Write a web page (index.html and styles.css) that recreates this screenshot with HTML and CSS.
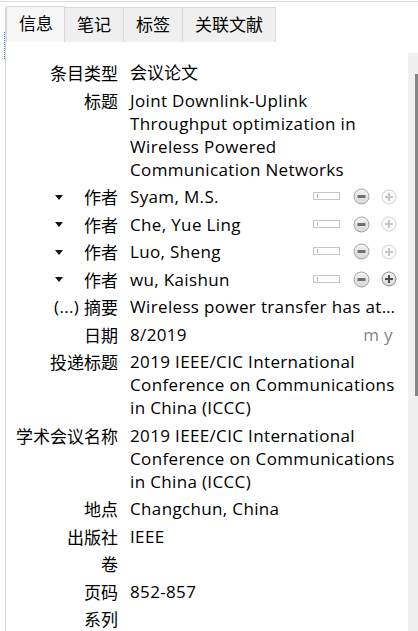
FILE: index.html
```html
<!DOCTYPE html>
<html lang="zh-CN">
<head>
<meta charset="utf-8">
<title>条目信息</title>
<link rel="stylesheet" href="styles.css">
</head>
<body>
<div class="app">
  <div class="topline"></div>
  <div class="main">
    <div class="gutter">
      <div class="focus"></div>
      <div class="gutter-line"></div>
    </div>
    <div class="pane">
      <div class="tabs">
        <div class="tab tab-active">信息</div>
        <div class="tab">笔记</div>
        <div class="tab">标签</div>
        <div class="tab">关联文献</div>
      </div>
      <div class="body">
        <div class="content">
          <div class="row"><div class="label">条目类型</div><div class="value cjk">会议论文</div></div>
          <div class="row"><div class="label">标题</div><div class="value">Joint Downlink-Uplink<br>Throughput optimization in<br>Wireless Powered<br>Communication Networks</div></div>

          <div class="row"><div class="label"><span class="tri"></span>作者</div><div class="value author"><span class="name">Syam, M.S.</span>
            <svg class="ico-box" width="27" height="8" viewBox="0 0 27 8"><rect x="0.5" y="0.5" width="26" height="7" fill="#fdfdfd" stroke="#c6c6c6"/><line x1="4.5" y1="2" x2="4.5" y2="6" stroke="#b4b4b4"/></svg>
            <svg class="ico-minus" width="17" height="17" viewBox="0 0 17 17"><defs><linearGradient id="gm" x1="0" y1="0" x2="0" y2="1"><stop offset="0" stop-color="#f4f4f4"/><stop offset="1" stop-color="#d6d6d6"/></linearGradient></defs><circle cx="8.5" cy="8.5" r="7.5" fill="url(#gm)" stroke="#a2a2a2"/><rect x="4.5" y="7" width="8" height="3" rx="0.5" fill="#6e6e6e"/></svg>
            <svg class="ico-plus" width="16" height="16" viewBox="0 0 16 16"><circle cx="8" cy="8" r="7" fill="#fafafa" stroke="#d2d2d2"/><rect x="4" y="7" width="8" height="2" fill="#c6c6c6"/><rect x="7" y="4" width="2" height="8" fill="#c6c6c6"/></svg>
          </div></div>

          <div class="row"><div class="label"><span class="tri"></span>作者</div><div class="value author"><span class="name">Che, Yue Ling</span>
            <svg class="ico-box" width="27" height="8" viewBox="0 0 27 8"><rect x="0.5" y="0.5" width="26" height="7" fill="#fdfdfd" stroke="#c6c6c6"/><line x1="4.5" y1="2" x2="4.5" y2="6" stroke="#b4b4b4"/></svg>
            <svg class="ico-minus" width="17" height="17" viewBox="0 0 17 17"><circle cx="8.5" cy="8.5" r="7.5" fill="url(#gm)" stroke="#a2a2a2"/><rect x="4.5" y="7" width="8" height="3" rx="0.5" fill="#6e6e6e"/></svg>
            <svg class="ico-plus" width="16" height="16" viewBox="0 0 16 16"><circle cx="8" cy="8" r="7" fill="#fafafa" stroke="#d2d2d2"/><rect x="4" y="7" width="8" height="2" fill="#c6c6c6"/><rect x="7" y="4" width="2" height="8" fill="#c6c6c6"/></svg>
          </div></div>

          <div class="row"><div class="label"><span class="tri"></span>作者</div><div class="value author"><span class="name">Luo, Sheng</span>
            <svg class="ico-box" width="27" height="8" viewBox="0 0 27 8"><rect x="0.5" y="0.5" width="26" height="7" fill="#fdfdfd" stroke="#c6c6c6"/><line x1="4.5" y1="2" x2="4.5" y2="6" stroke="#b4b4b4"/></svg>
            <svg class="ico-minus" width="17" height="17" viewBox="0 0 17 17"><circle cx="8.5" cy="8.5" r="7.5" fill="url(#gm)" stroke="#a2a2a2"/><rect x="4.5" y="7" width="8" height="3" rx="0.5" fill="#6e6e6e"/></svg>
            <svg class="ico-plus" width="16" height="16" viewBox="0 0 16 16"><circle cx="8" cy="8" r="7" fill="#fafafa" stroke="#d2d2d2"/><rect x="4" y="7" width="8" height="2" fill="#c6c6c6"/><rect x="7" y="4" width="2" height="8" fill="#c6c6c6"/></svg>
          </div></div>

          <div class="row"><div class="label"><span class="tri"></span>作者</div><div class="value author"><span class="name">wu, Kaishun</span>
            <svg class="ico-box" width="27" height="8" viewBox="0 0 27 8"><rect x="0.5" y="0.5" width="26" height="7" fill="#fdfdfd" stroke="#c6c6c6"/><line x1="4.5" y1="2" x2="4.5" y2="6" stroke="#b4b4b4"/></svg>
            <svg class="ico-minus" width="17" height="17" viewBox="0 0 17 17"><circle cx="8.5" cy="8.5" r="7.5" fill="url(#gm)" stroke="#a2a2a2"/><rect x="4.5" y="7" width="8" height="3" rx="0.5" fill="#6e6e6e"/></svg>
            <svg class="ico-plus" width="16" height="16" viewBox="0 0 16 16"><circle cx="8" cy="8" r="7" fill="url(#gm)" stroke="#8c8c8c"/><rect x="4" y="7" width="8" height="2" fill="#4e4e4e"/><rect x="7" y="4" width="2" height="8" fill="#4e4e4e"/></svg>
          </div></div>

          <div class="row"><div class="label"><span class="more">(...)</span>摘要</div><div class="value">Wireless power transfer has at…</div></div>
          <div class="row"><div class="label">日期</div><div class="value date"><span>8/2019</span><span class="dmy">m y</span></div></div>
          <div class="row"><div class="label">投递标题</div><div class="value">2019 IEEE/CIC International<br>Conference on Communications<br>in China (ICCC)</div></div>
          <div class="row"><div class="label">学术会议名称</div><div class="value">2019 IEEE/CIC International<br>Conference on Communications<br>in China (ICCC)</div></div>
          <div class="row"><div class="label">地点</div><div class="value">Changchun, China</div></div>
          <div class="row"><div class="label">出版社</div><div class="value">IEEE</div></div>
          <div class="row"><div class="label">卷</div><div class="value"></div></div>
          <div class="row"><div class="label">页码</div><div class="value">852-857</div></div>
          <div class="row"><div class="label">系列</div><div class="value"></div></div>
        </div>
        <div class="scrollbar"><div class="thumb"></div></div>
      </div>
    </div>
  </div>
</div>
</body>
</html>
```

FILE: styles.css
```css
html, body {
  margin: 0;
  padding: 0;
  background: #ffffff;
}

body {
  font-family: "Open Sans", "Noto Sans CJK SC", sans-serif;
  font-size: 17px;
  color: #000;
}

.app {
  width: 418px;
  height: 631px;
  overflow: hidden;
  display: flex;
  flex-direction: column;
}

.topline {
  margin-top: 1px;
  height: 1px;
  background: #dcdcdc;
  flex: none;
}

.main {
  flex: 1;
  display: flex;
  min-height: 0;
}

.gutter {
  width: 6px;
  flex: none;
  display: flex;
  padding-left: 4px;
  box-sizing: border-box;
}

.focus {
  width: 0;
  height: 27px;
  margin-top: 30px;
  border-left: 1px dotted #3a78d4;
}

.gutter-line {
  width: 0;
  margin-top: 5px;
  border-left: 1px solid #d6d6d6;
}

.pane {
  flex: 1;
  display: flex;
  flex-direction: column;
  min-width: 0;
}

.tabs {
  display: flex;
  align-items: flex-end;
  height: 40px;
  flex: none;
  font-family: "Noto Sans CJK SC", sans-serif;
}

.tab {
  height: 35px;
  box-sizing: border-box;
  padding: 0 12px;
  line-height: 31px;
  background: #f0f0f0;
  border: 1px solid #dadada;
  border-bottom: none;
  margin-left: -1px;
}

.tab:first-child {
  margin-left: 0;
}

.tab-active {
  height: 36px;
  line-height: 32px;
  background: #f6f6f6;
  padding: 0 11px 0 12px;
}

.body {
  flex: 1;
  display: flex;
  min-height: 0;
}

.content {
  flex: 1;
  padding-top: 17px;
  overflow: hidden;
}

.row {
  display: grid;
  grid-template-columns: 112px 1fr;
  column-gap: 12px;
  padding: 2.25px 11px 2.25px 0;
  line-height: 23px;
}

.label {
  display: flex;
  justify-content: flex-end;
  align-items: center;
  align-self: start;
  height: 23px;
  white-space: nowrap;
  font-family: "Noto Sans CJK SC", sans-serif;
}

.tri {
  width: 0;
  height: 0;
  border-left: 4px solid transparent;
  border-right: 4px solid transparent;
  border-top: 5px solid #111;
  margin-right: 21px;
  margin-top: 1px;
}

.more {
  font-family: "Open Sans", sans-serif;
  letter-spacing: 0.3px;
  margin-right: 5px;
}

.value {
  white-space: nowrap;
  min-height: 23px;
  letter-spacing: 0.35px;
}

.cjk {
  letter-spacing: 0;
}

.author {
  display: flex;
  align-items: center;
}

.name {
  flex: 1;
}

.ico-box {
  margin-right: 13px;
  margin-top: -1px;
}

.ico-minus {
  margin-right: 11px;
}

.date {
  display: flex;
  justify-content: space-between;
}

.dmy {
  color: #858585;
  margin-right: 4px;
}

.scrollbar {
  width: 10px;
  flex: none;
  margin-top: 11px;
  background: #f0f0f0;
  display: flex;
  justify-content: flex-end;
  align-items: flex-start;
}

.thumb {
  width: 3px;
  height: 322px;
  margin-top: 21px;
  background: #858585;
}
```
